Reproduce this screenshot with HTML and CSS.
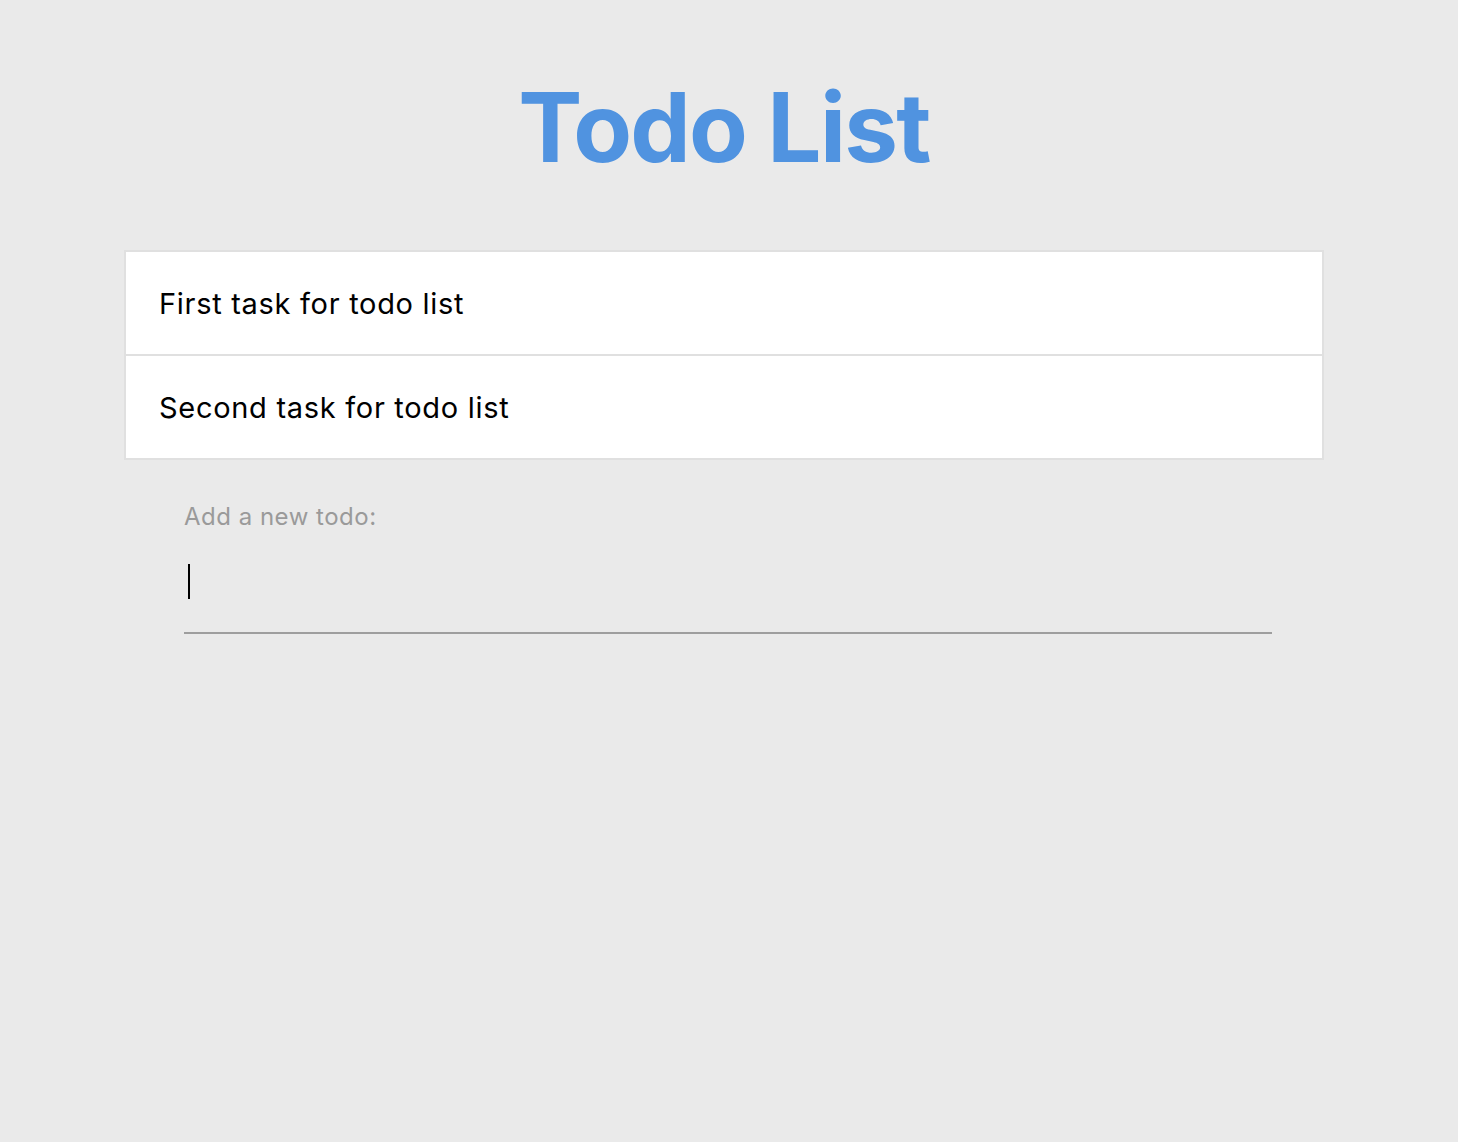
FILE: index.html
```html
<!DOCTYPE html>
<html lang="en">
<head>
<meta charset="utf-8">
<title>Todo List</title>
<link rel="stylesheet" href="styles.css">
</head>
<body>
<div class="page">
  <h1 class="title">Todo List</h1>
  <ul class="todo-list">
    <li class="todo-item">First task for todo list</li>
    <li class="todo-item">Second task for todo list</li>
  </ul>
  <form class="todo-form">
    <label class="todo-label" for="new-todo">Add a new todo:</label>
    <div class="input-wrap">
      <input class="todo-input" id="new-todo" type="text" autofocus autocomplete="off">
      <span class="caret" aria-hidden="true"></span>
    </div>
  </form>
</div>
</body>
</html>
```
FILE: styles.css
```css
html, body {
  margin: 0;
  padding: 0;
  background: #eaeaea;
}
body {
  font-family: Inter, "Noto Sans", "Liberation Sans", sans-serif;
  color: #000;
}
.page {
  width: 1200px;
  margin: 0 auto;
  position: relative;
  left: -5px;
}
.title {
  margin: 69px 0 0;
  font-size: 96px;
  line-height: 116px;
  font-weight: 700;
  letter-spacing: -1.7px;
  color: #5093e0;
  text-align: center;
}
.todo-list {
  list-style: none;
  margin: 65px 0 0;
  padding: 0;
  border: 2px solid #e0e0e0;
  background: #fff;
}
.todo-item {
  height: 102px;
  display: flex;
  align-items: center;
  padding-left: 33px;
  font-size: 29px;
  letter-spacing: 0.7px;
  box-sizing: border-box;
}
.todo-item + .todo-item {
  border-top: 2px solid #e0e0e0;
  height: 104px;
}
.todo-form {
  margin: 42px 0 0 60px;
  width: 1088px;
}
.todo-label {
  display: block;
  font-size: 24px;
  line-height: 29px;
  letter-spacing: 0.5px;
  color: #9a9a9a;
}
.input-wrap {
  position: relative;
}
.todo-input {
  display: block;
  box-sizing: content-box;
  width: 1084px;
  height: 34px;
  margin: 0;
  padding: 33px 0 34px 4px;
  border: none;
  border-bottom: 2px solid #9e9e9e;
  background: transparent;
  font-family: inherit;
  font-size: 28px;
  color: #000;
  outline: none;
  caret-color: transparent;
}
.caret {
  position: absolute;
  left: 4px;
  top: 33px;
  width: 2px;
  height: 35px;
  background: #000;
}
```
